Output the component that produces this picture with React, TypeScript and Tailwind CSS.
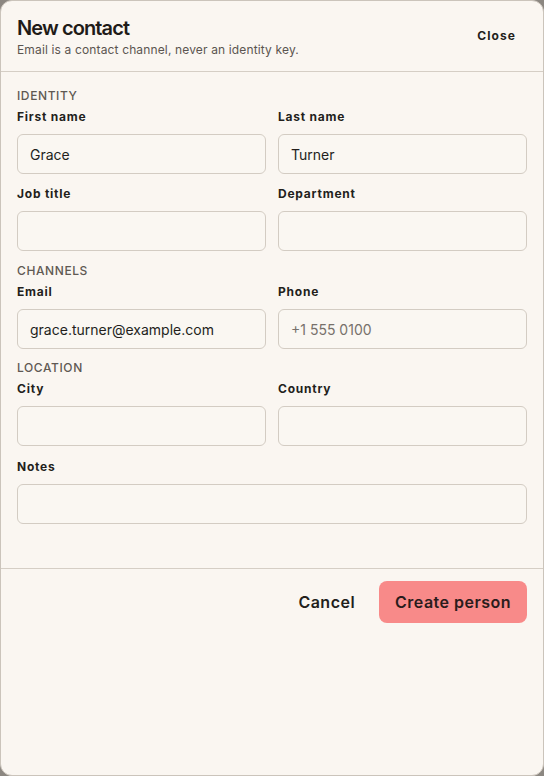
import React from 'react';

interface FieldProps {
  label: string;
  value?: string;
  placeholder?: string;
}

const Field: React.FC<FieldProps> = ({ label, value, placeholder }) => (
  <label className="flex flex-col">
    <span className="text-xs leading-[18px] font-bold tracking-[0.065em] text-[#231f1c] mb-2">{label}</span>
    <input
      defaultValue={value}
      placeholder={placeholder}
      className="h-10 w-full rounded-md border border-[#d3ccc3] bg-[#faf7f2] px-3 text-sm text-[#231f1c] placeholder:text-[#77716b] outline-none"
    />
  </label>
);

const SectionTitle: React.FC<{ children: React.ReactNode }> = ({ children }) => (
  <div className="text-xs leading-4 font-medium uppercase tracking-[0.05em] text-[#5f5953] mb-1">{children}</div>
);

export default function App() {
  return (
    <div className="h-[776px] w-[544px] bg-[#8c8781]" style={{ fontFamily: 'Inter, "Noto Sans", sans-serif' }}>
      <div className="flex h-full flex-col rounded-xl border border-[#cbc4bb] bg-[#faf6f1] overflow-hidden">
        <header className="flex items-center justify-between border-b border-[#d5cec5] px-4 pt-[13px] pb-[13px]">
          <div>
            <h1 className="text-xl leading-7 font-semibold tracking-[-0.045em] text-[#1f1b18]">New contact</h1>
            <p className="text-xs leading-4 tracking-[0.012em] text-[#5b5550]">Email is a contact channel, never an identity key.</p>
          </div>
          <button className="px-[11px] py-1.5 text-xs font-bold tracking-[0.09em] text-[#231f1c]">Close</button>
        </header>

        <div className="flex flex-col px-4 pt-4 pb-11">
          <SectionTitle>Identity</SectionTitle>
          <div className="grid grid-cols-2 gap-x-3 gap-y-[11px]">
            <Field label="First name" value="Grace" />
            <Field label="Last name" value="Turner" />
            <Field label="Job title" />
            <Field label="Department" />
          </div>

          <div className="mt-3">
            <SectionTitle>Channels</SectionTitle>
            <div className="grid grid-cols-2 gap-x-3">
              <Field label="Email" value="grace.turner@example.com" />
              <Field label="Phone" placeholder="+1 555 0100" />
            </div>
          </div>

          <div className="mt-[11px]">
            <SectionTitle>Location</SectionTitle>
            <div className="grid grid-cols-2 gap-x-3">
              <Field label="City" />
              <Field label="Country" />
            </div>
          </div>

          <div className="mt-3">
            <Field label="Notes" />
          </div>
        </div>

        <footer className="flex flex-1 items-start justify-end gap-2 border-t border-[#d5cec5] px-4 pt-3">
          <button className="h-[42px] px-4 text-base font-semibold tracking-[0.03em] text-[#231f1c]">Cancel</button>
          <button className="h-[42px] rounded-lg bg-[#f88a89] px-4 text-base font-semibold tracking-[0.03em] text-[#2a1c1c]">
            Create person
          </button>
        </footer>
      </div>
    </div>
  );
}
